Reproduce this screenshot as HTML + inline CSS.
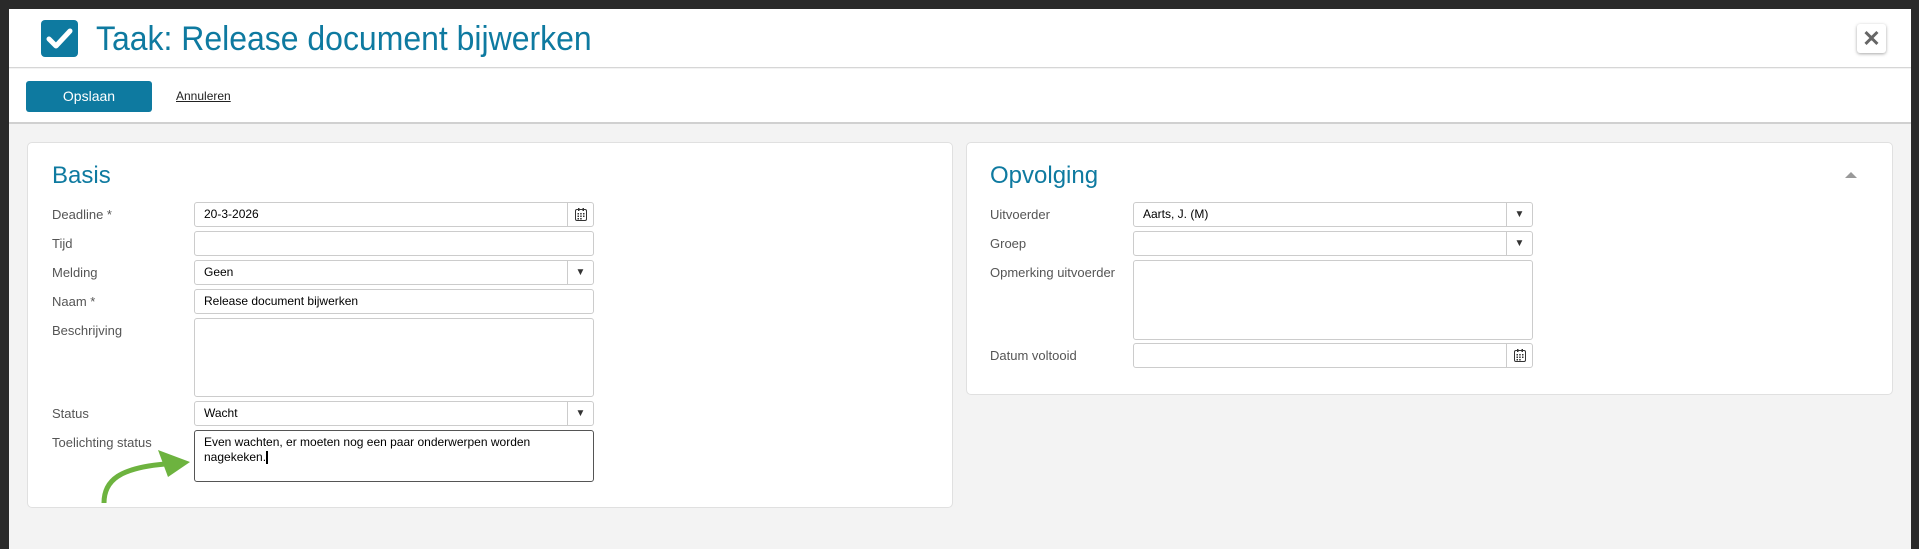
<!DOCTYPE html>
<html><head><meta charset="utf-8"><style>
*{box-sizing:border-box;margin:0;padding:0}
body{width:1919px;height:549px;background:#2a2a2a;font-family:"Liberation Sans",Arial,sans-serif;position:relative;overflow:hidden}
.abs{position:absolute}
#main{left:9px;top:9px;width:1902px;height:540px;background:#f3f3f3}
#hdr{left:9px;top:9px;width:1902px;height:59px;background:#fff;border-bottom:1px solid #d6d6d6}
#tb{left:9px;top:69px;width:1902px;height:55px;background:#fff;border-bottom:2px solid #d0d0d0}
.title{left:96px;top:20px;font-size:34px;color:#0e7aa0;line-height:38px;transform:scaleX(0.94);transform-origin:left;white-space:nowrap}
.btn{left:26px;top:81px;width:126px;height:31px;background:#0e7aa0;border-radius:3px;color:#fff;font-size:14px;text-align:center;line-height:31px}
.ann{left:176px;top:89px;font-size:12px;color:#222;text-decoration:underline}
.close{left:1857px;top:24px;width:29px;height:29px;background:#fff;border-radius:3px;box-shadow:0 1px 3px rgba(0,0,0,.35);color:#666;font-size:22px;font-weight:bold;text-align:center;line-height:29px}
.panel{background:#fff;border:1px solid #e0e0e0;border-radius:5px}
.h2{font-size:24px;color:#0e7aa0}
.lbl{font-size:13px;color:#555}
.in{background:#fff;border:1px solid #ccc;border-radius:3px;font-size:12px;color:#000;padding:0 9px;line-height:23px}
.dd{position:absolute;right:0;top:0;width:26px;height:100%;border-left:1px solid #ccc;text-align:center;font-size:10px;color:#333;line-height:23px}
.cal{position:absolute;left:7px;top:5px}
</style></head><body>
<div id="main" class="abs"></div>
<div id="hdr" class="abs"></div>
<div id="tb" class="abs"></div>
<svg class="abs" style="left:41px;top:20px" width="37" height="37" viewBox="0 0 37 37"><rect width="37" height="37" rx="4" fill="#0e7aa0"/><path d="M8 19 L15 26 L29 11" stroke="#fff" stroke-width="5" fill="none" stroke-linecap="round" stroke-linejoin="round"/></svg>
<div class="abs title">Taak: Release document bijwerken</div>
<div class="abs close">✕</div>
<div class="abs btn">Opslaan</div>
<div class="abs ann">Annuleren</div>

<div class="abs panel" style="left:27px;top:142px;width:926px;height:366px"></div>
<div class="abs h2" style="left:52px;top:162px">Basis</div>
<div class="abs lbl" style="left:52px;top:207px">Deadline *</div>
<div class="abs lbl" style="left:52px;top:236px">Tijd</div>
<div class="abs lbl" style="left:52px;top:265px">Melding</div>
<div class="abs lbl" style="left:52px;top:294px">Naam *</div>
<div class="abs lbl" style="left:52px;top:323px">Beschrijving</div>
<div class="abs lbl" style="left:52px;top:406px">Status</div>
<div class="abs lbl" style="left:52px;top:435px">Toelichting status</div>
<div class="abs in" style="left:194px;top:202px;width:400px;height:25px">20-3-2026<div class="dd"><svg class="cal" width="12" height="13" viewBox="0 0 12 13"><rect x="0.5" y="1.5" width="11" height="11" rx="1.5" fill="none" stroke="#333"/><rect x="3" y="0" width="1.5" height="3" fill="#333"/><rect x="7.5" y="0" width="1.5" height="3" fill="#333"/><path d="M2.5 5h1.5v1.5h-1.5zM5.2 5h1.5v1.5h-1.5zM8 5h1.5v1.5h-1.5zM2.5 7.5h1.5v1.5h-1.5zM5.2 7.5h1.5v1.5h-1.5zM8 7.5h1.5v1.5h-1.5zM2.5 10h1.5v1.5h-1.5zM5.2 10h1.5v1.5h-1.5z" fill="#333"/></svg></div></div>
<div class="abs in" style="left:194px;top:231px;width:400px;height:25px"></div>
<div class="abs in" style="left:194px;top:260px;width:400px;height:25px">Geen<div class="dd">▼</div></div>
<div class="abs in" style="left:194px;top:289px;width:400px;height:25px">Release document bijwerken</div>
<div class="abs in" style="left:194px;top:318px;width:400px;height:79px"></div>
<div class="abs in" style="left:194px;top:401px;width:400px;height:25px">Wacht<div class="dd">▼</div></div>
<div class="abs in" style="left:194px;top:430px;width:400px;height:52px;border-color:#555;line-height:15px;padding-top:4px">Even wachten, er moeten nog een paar onderwerpen worden<br>nagekeken.<span style="display:inline-block;width:2px;height:13px;background:#000;vertical-align:middle"></span></div>
<svg class="abs" style="left:90px;top:440px" width="110" height="75"><path d="M14 63 C14 40 30 28 75 24" stroke="#6db33f" stroke-width="5" fill="none"/><path d="M68 10 L100 22 L78 37 Z" fill="#6db33f"/></svg>

<div class="abs panel" style="left:966px;top:142px;width:927px;height:253px"></div>
<div class="abs h2" style="left:990px;top:162px">Opvolging</div>
<div class="abs" style="left:1845px;top:172px;width:0;height:0;border-left:6px solid transparent;border-right:6px solid transparent;border-bottom:6px solid #999"></div>
<div class="abs lbl" style="left:990px;top:207px">Uitvoerder</div>
<div class="abs lbl" style="left:990px;top:236px">Groep</div>
<div class="abs lbl" style="left:990px;top:265px">Opmerking uitvoerder</div>
<div class="abs lbl" style="left:990px;top:348px">Datum voltooid</div>
<div class="abs in" style="left:1133px;top:202px;width:400px;height:25px">Aarts, J. (M)<div class="dd">▼</div></div>
<div class="abs in" style="left:1133px;top:231px;width:400px;height:25px"><div class="dd">▼</div></div>
<div class="abs in" style="left:1133px;top:260px;width:400px;height:80px"></div>
<div class="abs in" style="left:1133px;top:343px;width:400px;height:25px"><div class="dd"><svg class="cal" width="12" height="13" viewBox="0 0 12 13"><rect x="0.5" y="1.5" width="11" height="11" rx="1.5" fill="none" stroke="#333"/><rect x="3" y="0" width="1.5" height="3" fill="#333"/><rect x="7.5" y="0" width="1.5" height="3" fill="#333"/><path d="M2.5 5h1.5v1.5h-1.5zM5.2 5h1.5v1.5h-1.5zM8 5h1.5v1.5h-1.5zM2.5 7.5h1.5v1.5h-1.5zM5.2 7.5h1.5v1.5h-1.5zM8 7.5h1.5v1.5h-1.5zM2.5 10h1.5v1.5h-1.5zM5.2 10h1.5v1.5h-1.5z" fill="#333"/></svg></div></div>
</body></html>
